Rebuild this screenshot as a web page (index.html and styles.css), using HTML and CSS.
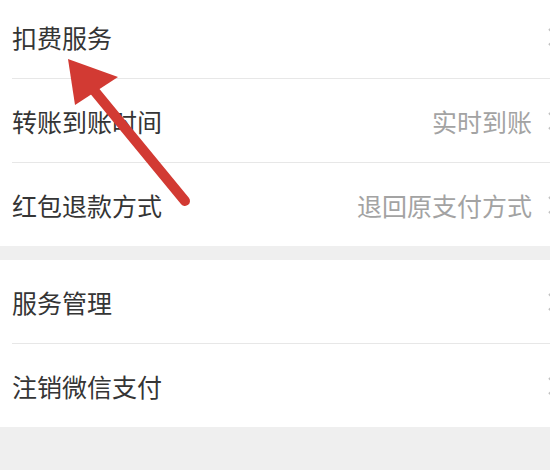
FILE: index.html
```html
<!DOCTYPE html>
<html lang="zh-CN">
<head>
    <meta charset="UTF-8">
    <meta name="viewport" content="width=device-width, initial-scale=1.0">
    <title>支付设置</title>
    <link rel="stylesheet" href="styles.css">
</head>
<body>
    <div class="page">
        <div class="group group-first">
            <div class="cell">
                <span class="label">扣费服务</span>
                <svg class="chevron" viewBox="0 0 10 18"><polyline points="1,1 9,9 1,17"/></svg>
            </div>
            <div class="cell">
                <span class="label">转账到账时间</span>
                <span class="value">实时到账</span>
                <svg class="chevron" viewBox="0 0 10 18"><polyline points="1,1 9,9 1,17"/></svg>
            </div>
            <div class="cell">
                <span class="label">红包退款方式</span>
                <span class="value">退回原支付方式</span>
                <svg class="chevron" viewBox="0 0 10 18"><polyline points="1,1 9,9 1,17"/></svg>
            </div>
        </div>

        <div class="group">
            <div class="cell">
                <span class="label">服务管理</span>
                <svg class="chevron" viewBox="0 0 10 18"><polyline points="1,1 9,9 1,17"/></svg>
            </div>
            <div class="cell">
                <span class="label">注销微信支付</span>
                <svg class="chevron" viewBox="0 0 10 18"><polyline points="1,1 9,9 1,17"/></svg>
            </div>
        </div>

        <!-- annotation arrow drawn over the list -->
        <svg class="arrow" viewBox="0 0 550 470">
            <line x1="185" y1="206" x2="88" y2="88"/>
            <polygon points="68,64 118,82 75,110"/>
        </svg>
    </div>
</body>
</html>
```

FILE: styles.css
```css
html,
body {
    margin: 0;
    padding: 0;
}

body {
    background: #efefef;
    font-family: "Noto Sans CJK SC", "Noto Sans", sans-serif;
    overflow: hidden;
}

.page {
    position: relative;
    min-height: 470px;
}

.group {
    background: #fff;
    margin-top: 14px;
}

.group-first {
    margin-top: -5px;
}

.cell {
    display: flex;
    align-items: center;
    height: 83px;
    margin-left: 12px;
}

.cell + .cell {
    border-top: 1px solid #e7e7e7;
}

.label {
    font-size: 25px;
    color: #353535;
}

.value {
    margin-left: auto;
    font-size: 25px;
    color: #a3a3a3;
}

.chevron {
    width: 10px;
    height: 18px;
    margin-left: auto;
    margin-right: -8px;
    flex-shrink: 0;
}

.value + .chevron {
    margin-left: 16px;
}

.chevron polyline {
    fill: none;
    stroke: #c2c2c2;
    stroke-width: 2;
}

.arrow {
    position: absolute;
    left: 0;
    top: 0;
    width: 550px;
    height: 470px;
}

.arrow line {
    stroke: #d23a33;
    stroke-width: 10;
    stroke-linecap: round;
}

.arrow polygon {
    fill: #d23a33;
}
```
